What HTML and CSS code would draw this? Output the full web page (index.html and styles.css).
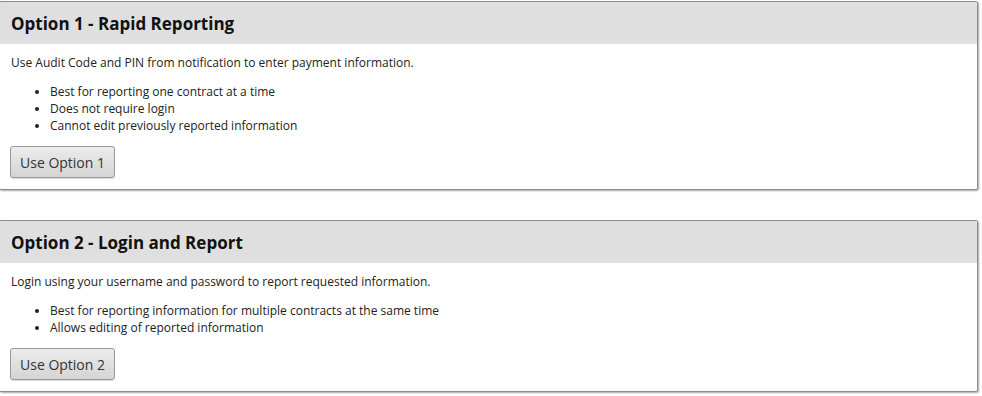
FILE: index.html
```html
<!DOCTYPE html>
<html>
<head>
<meta charset="utf-8">
<link rel="stylesheet" href="styles.css">
</head>
<body>
<div class="panel">
  <div class="panel-head"><h2>Option 1 - Rapid Reporting</h2></div>
  <div class="panel-body">
    <p>Use Audit Code and PIN from notification to enter payment information.</p>
    <ul>
      <li>Best for reporting one contract at a time</li>
      <li>Does not require login</li>
      <li>Cannot edit previously reported information</li>
    </ul>
    <button class="btn">Use Option 1</button>
  </div>
</div>
<div class="panel">
  <div class="panel-head"><h2>Option 2 - Login and Report</h2></div>
  <div class="panel-body">
    <p>Login using your username and password to report requested information.</p>
    <ul>
      <li>Best for reporting information for multiple contracts at the same time</li>
      <li>Allows editing of reported information</li>
    </ul>
    <button class="btn">Use Option 2</button>
  </div>
</div>
</body>
</html>
```
FILE: styles.css
```css
body {
  margin: 0;
  padding-top: 1px;
  font-family: "Open Sans", "Noto Sans", sans-serif;
  font-size: 12px;
  color: #222;
  background: #fff;
}
.panel {
  margin: 0 4px 30px -1px;
  border: 1px solid #8c8c8c;
  border-radius: 2px;
  box-shadow: 1px 1px 2px rgba(0,0,0,0.35);
  background: #fff;
}
.panel:last-child {
  margin-bottom: 3px;
}
.panel-head {
  background: #dfdfdf;
  height: 42px;
  display: flex;
  align-items: center;
  padding: 0 11px;
}
.panel-head h2 {
  margin: 0;
  font-size: 17px;
  font-weight: 700;
  color: #111;
}
.panel-body {
  padding: 10px 10px 11px 11px;
}
.panel-body p {
  margin: 0 0 12px;
  line-height: 17px;
}
.panel-body ul {
  margin: 0 0 12px;
  padding-left: 39px;
  line-height: 17px;
}
.btn {
  display: block;
  font-family: "Open Sans", "Noto Sans", sans-serif;
  font-size: 14px;
  color: #333;
  height: 32px;
  padding: 0 9px;
  margin-left: -1px;
  border: 1px solid #999;
  border-radius: 3px;
  background: linear-gradient(#ececec, #d4d4d4);
  box-shadow: 0 1px 1px rgba(0,0,0,0.15);
}
```
